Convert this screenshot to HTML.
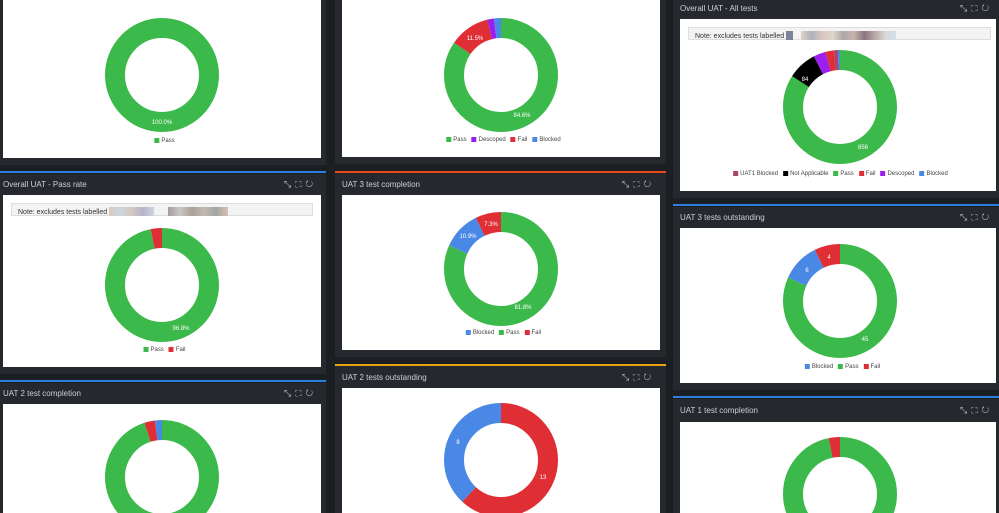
<!DOCTYPE html><html><head><meta charset="utf-8"><style>
body{margin:0;width:999px;height:513px;overflow:hidden;background:#1c1f22;font-family:"Liberation Sans",sans-serif;position:relative}
.p{position:absolute;background:#25292d}
.bar{position:absolute;height:2px}
.h{position:absolute;color:#c9d0d6;font-size:8px}
.ic{position:absolute;color:#bfc5ca;font-size:9px;letter-spacing:4px}
.w{position:absolute;background:#fff}
.note{position:absolute;background:#f3f3f3;border:1px solid #ddd;font-size:7px;color:#333;padding:3px 6px;box-sizing:border-box;height:13px;line-height:7px}
svg{position:absolute;left:0;top:0}
.lg{position:absolute;font-size:6px;color:#444;white-space:nowrap;transform:translateX(-50%)}
.lg i{display:inline-block;width:5px;height:5px;margin:0 2px 0 5px;vertical-align:-1px}
.bl{display:inline-block;width:9px;height:9px;vertical-align:-2px}
</style></head><body>
<div class="p" style="left:0;top:0;width:326px;height:165px"></div>
<div class="p" style="left:0;top:174px;width:326px;height:200px"></div>
<div class="p" style="left:0;top:383px;width:326px;height:130px"></div>
<div class="p" style="left:335px;top:0;width:331px;height:164px"></div>
<div class="p" style="left:335px;top:173px;width:331px;height:184px"></div>
<div class="p" style="left:335px;top:366px;width:331px;height:147px"></div>
<div class="p" style="left:673px;top:0;width:326px;height:198px"></div>
<div class="p" style="left:673px;top:207px;width:326px;height:183px"></div>
<div class="p" style="left:673px;top:399px;width:326px;height:114px"></div>
<div class="bar" style="left:0;top:171px;width:326px;background:#2f7de1"></div>
<div class="bar" style="left:0;top:380px;width:326px;background:#2f7de1"></div>
<div class="bar" style="left:335px;top:171px;width:331px;background:#e8461c"></div>
<div class="bar" style="left:335px;top:364px;width:331px;background:#e8a316"></div>
<div class="bar" style="left:673px;top:204px;width:326px;background:#2f7de1"></div>
<div class="bar" style="left:673px;top:396px;width:326px;background:#2f7de1"></div>
<div class="h" style="left:3px;top:180px">Overall UAT - Pass rate</div>
<div class="h" style="left:3px;top:389px">UAT 2 test completion</div>
<div class="h" style="left:342px;top:180px">UAT 3 test completion</div>
<div class="h" style="left:342px;top:373px">UAT 2 tests outstanding</div>
<div class="h" style="left:680px;top:4px">Overall UAT - All tests</div>
<div class="h" style="left:680px;top:213px">UAT 3 tests outstanding</div>
<div class="h" style="left:680px;top:406px">UAT 1 test completion</div>
<div class="ic" style="left:284px;top:179px">⤡⛶↻</div>
<div class="ic" style="left:284px;top:388px">⤡⛶↻</div>
<div class="ic" style="left:622px;top:179px">⤡⛶↻</div>
<div class="ic" style="left:622px;top:372px">⤡⛶↻</div>
<div class="ic" style="left:960px;top:3px">⤡⛶↻</div>
<div class="ic" style="left:960px;top:212px">⤡⛶↻</div>
<div class="ic" style="left:960px;top:405px">⤡⛶↻</div>
<div class="w" style="left:3px;top:0;width:318px;height:158px"></div>
<div class="w" style="left:3px;top:195px;width:318px;height:172px"></div>
<div class="w" style="left:3px;top:404px;width:318px;height:109px"></div>
<div class="w" style="left:342px;top:0;width:318px;height:157px"></div>
<div class="w" style="left:342px;top:195px;width:318px;height:155px"></div>
<div class="w" style="left:342px;top:388px;width:318px;height:125px"></div>
<div class="w" style="left:680px;top:19px;width:316px;height:172px"></div>
<div class="w" style="left:680px;top:228px;width:316px;height:155px"></div>
<div class="w" style="left:680px;top:422px;width:316px;height:91px"></div>
<div class="note" style="left:11px;top:203px;width:302px">Note: excludes tests labelled <span class="bl" style="width:45px;background:linear-gradient(90deg,#dcc9bd,#c8d8e2,#d6c8c0,#b7b4cc,#ccd5e0)"></span> <span class="bl" style="width:60px;margin-left:12px;background:linear-gradient(90deg,#a89aa0,#c9c7c3,#aaa098,#c2bbb2,#a3a4a3,#d6c2b4)"></span></div>
<div class="note" style="left:688px;top:27px;width:303px">Note: excludes tests labelled <span class="bl" style="width:7px;background:#7d8398"></span> <span class="bl" style="width:95px;margin-left:6px;background:linear-gradient(90deg,#e0d3c6,#b0b1bc,#d8c6c0,#e0d6c8,#aca8a8,#c6b4ac,#8a7680,#b8a8a4,#d8d8d8,#d4e0ea)"></span></div>
<svg width="999" height="513" viewBox="0 0 999 513" font-family="Liberation Sans" font-size="6" fill="#fff">
<g fill="none" stroke-width="20">
<circle cx="162" cy="75" r="47" stroke="#3bb94a"/>
<g transform="rotate(-90 501 75)">
<circle cx="501" cy="75" r="47" pathLength="100" stroke="#3bb94a" stroke-dasharray="84.6 100"/>
<circle cx="501" cy="75" r="47" pathLength="100" stroke="#e02e35" stroke-dasharray="0 84.6 11.5 100"/>
<circle cx="501" cy="75" r="47" pathLength="100" stroke="#9d1ff0" stroke-dasharray="0 96.1 1.9 100"/>
<circle cx="501" cy="75" r="47" pathLength="100" stroke="#4a88e6" stroke-dasharray="0 98 2 100"/></g>
<g transform="rotate(-90 840 107)">
<circle cx="840" cy="107" r="47" pathLength="100" stroke="#3bb94a" stroke-dasharray="84.1 100"/>
<circle cx="840" cy="107" r="47" pathLength="100" stroke="#000" stroke-dasharray="0 84.1 8.3 100"/>
<circle cx="840" cy="107" r="47" pathLength="100" stroke="#9d1ff0" stroke-dasharray="0 92.4 3.5 100"/>
<circle cx="840" cy="107" r="47" pathLength="100" stroke="#e02e35" stroke-dasharray="0 95.9 2.3 100"/>
<circle cx="840" cy="107" r="47" pathLength="100" stroke="#a8456f" stroke-dasharray="0 98.2 1.2 100"/>
<circle cx="840" cy="107" r="47" pathLength="100" stroke="#4a88e6" stroke-dasharray="0 99.4 0.6 100"/></g>
<g transform="rotate(-90 162 285)">
<circle cx="162" cy="285" r="47" pathLength="100" stroke="#3bb94a" stroke-dasharray="96.8 100"/>
<circle cx="162" cy="285" r="47" pathLength="100" stroke="#e02e35" stroke-dasharray="0 96.8 3.2 100"/></g>
<g transform="rotate(-90 501 269)">
<circle cx="501" cy="269" r="47" pathLength="100" stroke="#3bb94a" stroke-dasharray="81.8 100"/>
<circle cx="501" cy="269" r="47" pathLength="100" stroke="#4a88e6" stroke-dasharray="0 81.8 10.9 100"/>
<circle cx="501" cy="269" r="47" pathLength="100" stroke="#e02e35" stroke-dasharray="0 92.7 7.3 100"/></g>
<g transform="rotate(-90 840 301)">
<circle cx="840" cy="301" r="47" pathLength="100" stroke="#3bb94a" stroke-dasharray="81.8 100"/>
<circle cx="840" cy="301" r="47" pathLength="100" stroke="#4a88e6" stroke-dasharray="0 81.8 10.9 100"/>
<circle cx="840" cy="301" r="47" pathLength="100" stroke="#e02e35" stroke-dasharray="0 92.7 7.3 100"/></g>
<g transform="rotate(-90 162 477)">
<circle cx="162" cy="477" r="47" pathLength="100" stroke="#3bb94a" stroke-dasharray="95 100"/>
<circle cx="162" cy="477" r="47" pathLength="100" stroke="#e02e35" stroke-dasharray="0 95 3 100"/>
<circle cx="162" cy="477" r="47" pathLength="100" stroke="#4a88e6" stroke-dasharray="0 98 2 100"/></g>
<g transform="rotate(-90 501 460)">
<circle cx="501" cy="460" r="47" pathLength="100" stroke="#e02e35" stroke-dasharray="61.9 100"/>
<circle cx="501" cy="460" r="47" pathLength="100" stroke="#4a88e6" stroke-dasharray="0 61.9 38.1 100"/></g>
<g transform="rotate(-90 840 494)">
<circle cx="840" cy="494" r="47" pathLength="100" stroke="#3bb94a" stroke-dasharray="96.8 100"/>
<circle cx="840" cy="494" r="47" pathLength="100" stroke="#e02e35" stroke-dasharray="0 96.8 3.2 100"/></g>
</g>
<text x="162" y="124" text-anchor="middle">100.0%</text>
<text x="475" y="40" text-anchor="middle">11.5%</text>
<text x="522" y="117" text-anchor="middle">84.6%</text>
<text x="805" y="81" text-anchor="middle">84</text>
<text x="863" y="149" text-anchor="middle">856</text>
<text x="181" y="330" text-anchor="middle">96.8%</text>
<text x="468" y="238" text-anchor="middle">10.9%</text>
<text x="491" y="226" text-anchor="middle">7.3%</text>
<text x="523" y="309" text-anchor="middle">81.8%</text>
<text x="807" y="272" text-anchor="middle">6</text>
<text x="829" y="259" text-anchor="middle">4</text>
<text x="865" y="341" text-anchor="middle">45</text>
<text x="458" y="444" text-anchor="middle">8</text>
<text x="543" y="479" text-anchor="middle">13</text>
</svg>
<div class="lg" style="left:162px;top:138px"><i style="background:#3bb94a"></i>Pass</div>
<div class="lg" style="left:501px;top:137px"><i style="background:#3bb94a"></i>Pass<i style="background:#9d1ff0"></i>Descoped<i style="background:#e02e35"></i>Fail<i style="background:#4a88e6"></i>Blocked</div>
<div class="lg" style="left:838px;top:171px"><i style="background:#a8456f"></i>UAT1 Blocked<i style="background:#000"></i>Not Applicable<i style="background:#3bb94a"></i>Pass<i style="background:#e02e35"></i>Fail<i style="background:#9d1ff0"></i>Descoped<i style="background:#4a88e6"></i>Blocked</div>
<div class="lg" style="left:162px;top:347px"><i style="background:#3bb94a"></i>Pass<i style="background:#e02e35"></i>Fail</div>
<div class="lg" style="left:501px;top:330px"><i style="background:#4a88e6"></i>Blocked<i style="background:#3bb94a"></i>Pass<i style="background:#e02e35"></i>Fail</div>
<div class="lg" style="left:840px;top:364px"><i style="background:#4a88e6"></i>Blocked<i style="background:#3bb94a"></i>Pass<i style="background:#e02e35"></i>Fail</div>
</body></html>
